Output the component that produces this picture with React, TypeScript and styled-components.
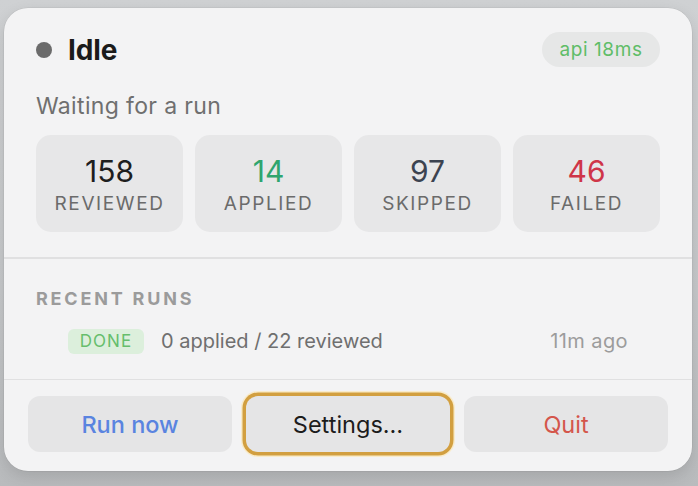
import React from "react";
import styled, { createGlobalStyle } from "styled-components";

const Global = createGlobalStyle`
  html, body { margin: 0; padding: 0; }
  body {
    width: 698px;
    height: 486px;
    overflow: hidden;
    background: linear-gradient(180deg, #cfd1d3 0%, #c6c8ca 60%, #b9bbbd 100%);
    font-family: Inter, "Noto Sans", "Liberation Sans", sans-serif;
    -webkit-font-smoothing: antialiased;
  }
`;

const Card = styled.div`
  box-sizing: border-box;
  margin: 8px 0 0 4px;
  width: 688px;
  height: 463px;
  border-radius: 24px;
  background: #f3f3f4;
  box-shadow: 0 6px 16px rgba(0, 0, 0, 0.12), 0 0 0 0.5px rgba(0, 0, 0, 0.08);
  display: flex;
  flex-direction: column;
  overflow: hidden;
`;

const Top = styled.section`
  padding: 24px 32px 0 32px;
  height: 249px;
  box-sizing: border-box;
  display: flex;
  flex-direction: column;
`;

const HeaderRow = styled.div`
  display: flex;
  align-items: center;
  justify-content: space-between;
  height: 35px;
`;

const Status = styled.div`
  display: flex;
  align-items: center;
  gap: 16px;
`;

const Dot = styled.span`
  width: 16px;
  height: 16px;
  border-radius: 50%;
  background: #6b6b6b;
`;

const Title = styled.h1`
  margin: 0;
  font-size: 28px;
  font-weight: 700;
  color: #1b1b1b;
  letter-spacing: -0.1px;
`;

const Pill = styled.span`
  display: inline-flex;
  align-items: center;
  justify-content: center;
  height: 35px;
  width: 118px;
  border-radius: 18px;
  background: #e6e7e7;
  color: #5fbd68;
  font-size: 19px;
  letter-spacing: 0.6px;
`;

const Subtitle = styled.p`
  margin: 27px 0 0 0;
  font-size: 23px;
  line-height: 25px;
  letter-spacing: 0.35px;
  color: #6f6f6f;
`;

const Stats = styled.div`
  margin-top: 16px;
  display: grid;
  grid-template-columns: repeat(4, 147px);
  gap: 12px;
`;

const StatBox = styled.div`
  height: 97px;
  border-radius: 15px;
  background: #e7e7e8;
  display: flex;
  flex-direction: column;
  align-items: center;
  padding-top: 19px;
  box-sizing: border-box;
`;

const StatValue = styled.div<{ $color: string }>`
  font-size: 30px;
  line-height: 34px;
  font-weight: 400;
  color: ${(p) => p.$color};
`;

const StatLabel = styled.div`
  margin-top: 5px;
  font-size: 19px;
  line-height: 22px;
  letter-spacing: 1.6px;
  color: #6b6b6b;
`;

const Divider = styled.hr`
  margin: 0;
  border: none;
  height: 1.5px;
  background: #e0e0e1;
`;

const Recent = styled.section`
  height: 120px;
  box-sizing: border-box;
  padding: 30px 32px 0 32px;
`;

const SectionTitle = styled.h2`
  margin: 0;
  font-size: 18px;
  line-height: 20px;
  font-weight: 700;
  letter-spacing: 2.8px;
  color: #9b9b9b;
`;

const RunRow = styled.div`
  margin-top: 20px;
  padding: 0 32px;
  display: flex;
  align-items: center;
  gap: 17px;
`;

const StatusTag = styled.span`
  display: inline-flex;
  align-items: center;
  justify-content: center;
  width: 76px;
  height: 25px;
  border-radius: 6px;
  background: #dcefdc;
  color: #66be6c;
  font-size: 17px;
  letter-spacing: 1px;
`;

const RunText = styled.span`
  font-size: 20px;
  color: #6f6f6f;
  flex: 1;
`;

const RunTime = styled.span`
  font-size: 20px;
  letter-spacing: 0.4px;
  color: #9c9c9c;
`;

const Actions = styled.section`
  flex: 1;
  display: grid;
  grid-template-columns: repeat(3, 204px);
  gap: 14px;
  padding: 16px 24px 0 24px;
  align-content: start;
`;

const ActionButton = styled.button<{ $color: string; $focused?: boolean; $weight?: number }>`
  height: 56px;
  border: none;
  border-radius: 12px;
  background: #e5e5e6;
  color: ${(p) => p.$color};
  font-family: inherit;
  font-size: 23.5px;
  font-weight: ${(p) => p.$weight ?? 400};
  box-shadow: ${(p) =>
    p.$focused ? "0 0 0 3.5px #d29f40, 0 0 0 5px rgba(250, 232, 190, 0.8)" : "none"};
`;

const stats = [
  { value: "158", label: "REVIEWED", color: "#1e1e1e" },
  { value: "14", label: "APPLIED", color: "#2fa56e" },
  { value: "97", label: "SKIPPED", color: "#3c4350" },
  { value: "46", label: "FAILED", color: "#cf3548" },
];

export default function App() {
  return (
    <>
      <Global />
      <Card>
        <Top>
          <HeaderRow>
            <Status>
              <Dot />
              <Title>Idle</Title>
            </Status>
            <Pill>api 18ms</Pill>
          </HeaderRow>
          <Subtitle>Waiting for a run</Subtitle>
          <Stats>
            {stats.map((s) => (
              <StatBox key={s.label}>
                <StatValue $color={s.color}>{s.value}</StatValue>
                <StatLabel>{s.label}</StatLabel>
              </StatBox>
            ))}
          </Stats>
        </Top>
        <Divider />
        <Recent>
          <SectionTitle>RECENT RUNS</SectionTitle>
          <RunRow>
            <StatusTag>DONE</StatusTag>
            <RunText>0 applied / 22 reviewed</RunText>
            <RunTime>11m ago</RunTime>
          </RunRow>
        </Recent>
        <Divider />
        <Actions>
          <ActionButton $color="#5a84e0" $weight={500}>Run now</ActionButton>
          <ActionButton $color="#1c1c1c" $focused>Settings…</ActionButton>
          <ActionButton $color="#d4564b">Quit</ActionButton>
        </Actions>
      </Card>
    </>
  );
}
